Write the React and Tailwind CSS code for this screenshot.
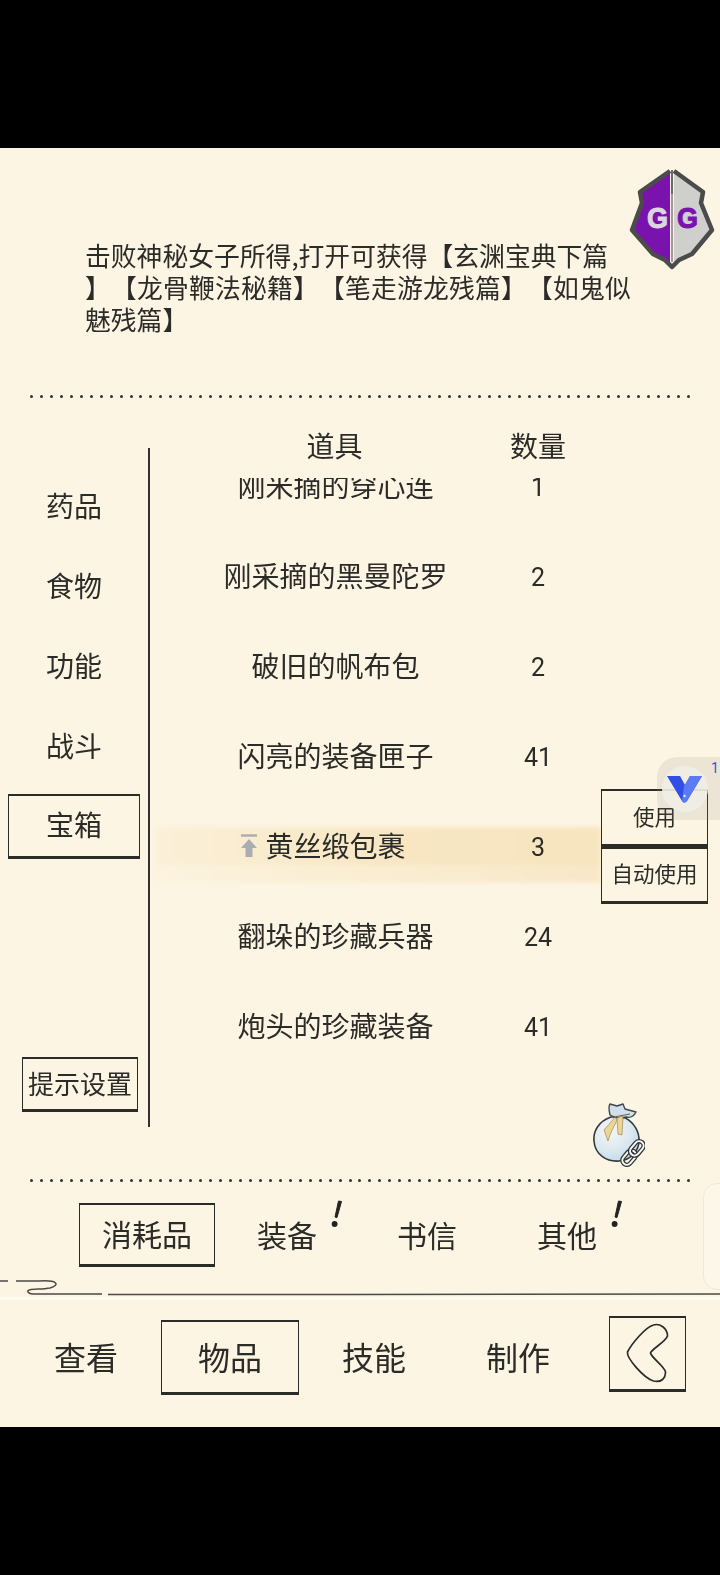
const sideTabs = ["药品", "食物", "功能", "战斗", "宝箱"];

const items = [
  { name: "刚米摘的穿心连", count: 1 },
  { name: "刚采摘的黑曼陀罗", count: 2 },
  { name: "破旧的帆布包", count: 2 },
  { name: "闪亮的装备匣子", count: 41 },
  { name: "黄丝缎包裹", count: 3, active: true },
  { name: "翻垛的珍藏兵器", count: 24 },
  { name: "炮头的珍藏装备", count: 41 },
];

const bagTabs = [
  { label: "消耗品", active: true },
  { label: "装备", alert: true },
  { label: "书信" },
  { label: "其他", alert: true },
];

const navTabs = [
  { label: "查看" },
  { label: "物品", active: true },
  { label: "技能" },
  { label: "制作" },
];

// the hand drawn frame used by every selected tab and button
const frame = "border-t-2 border-b-[3px] border-x-[1.5px] border-[#2b2b28]";

function DotLine() {
  return (
    <div className="ml-[30px] flex w-[660px] items-center justify-between">
      {Array.from({ length: 67 }, (_, i) => (
        <span key={i} className="size-[3px] rounded-full bg-[#33322e]" />
      ))}
    </div>
  );
}

function Alert() {
  return (
    <svg viewBox="0 0 12 28" className="absolute left-[114px] top-[-3px] h-[28px] w-[12px]">
      <path d="M10.5 1.5 L7.5 1 L4 17 L6 17.5 Z" fill="#22221f" stroke="#22221f" strokeLinejoin="round" />
      <circle cx="3.6" cy="24" r="2.9" fill="#22221f" />
    </svg>
  );
}

function GameGuardian() {
  return (
    <svg viewBox="-3 -3 87 103" className="absolute left-[629px] top-[167px] h-[103px] w-[87px]">
      <path d="M38 3 L9 23 L11 33 L2 60 L21 82 L38 93 Z" fill="#7a12ad" />
      <path d="M42 3 L70 23 L68 33 L78 60 L60 82 L42 93 Z" fill="#cfcfce" />
      <path
        d="M38 1 L8 22 L10 33 L0 60 L21 84 L33 90 L40 97 L47 90 L60 84 L80 60 L69 33 L71 22 L42 1"
        fill="none"
        stroke="#4b4b4b"
        strokeWidth="4.500"
        strokeLinejoin="round"
      />
      <path d="M40 0 V24" stroke="#6a6a6a" strokeWidth="2" />
      <path d="M40 24 V92" stroke="#4a3a52" strokeWidth="1" />
      <text x="15" y="58" fontFamily="Liberation Sans" fontWeight="700" fontSize="29" fill="#dcd6e0" stroke="#dcd6e0" strokeWidth="1" textLength="21" lengthAdjust="spacingAndGlyphs">G</text>
      <text x="45" y="58" fontFamily="Liberation Sans" fontWeight="700" fontSize="29" fill="#7a12ad" stroke="#7a12ad" strokeWidth="1" textLength="21" lengthAdjust="spacingAndGlyphs">G</text>
    </svg>
  );
}

function LootBag() {
  return (
    <svg viewBox="0 0 52 64" className="absolute left-[593px] top-[1103px] h-[64px] w-[52px]">
      <defs>
        <radialGradient id="bag" cx="0.35" cy="0.3" r="0.8">
          <stop offset="0" stopColor="#f6f6f2" />
          <stop offset="0.6" stopColor="#dbe8f0" />
          <stop offset="1" stopColor="#b9d6ea" />
        </radialGradient>
      </defs>
      <path d="M18 14 C 6 18 0 28 1 38 C 2 52 14 59 26 58 C 38 57 47 48 46 35 C 45 25 38 17 30 14 Z" fill="url(#bag)" stroke="#33383c" strokeWidth="1.6" />
      <path d="M17 12 C 16 7 15 4 17 1 L 24 3 L 30 1 L 32 6 L 43 9 C 41 13 37 15 33 14 C 28 16 22 15 17 12 Z" fill="#cfe0ec" stroke="#3f464b" strokeWidth="1.4" strokeLinejoin="round" />
      <path d="M22 14 C 18 20 13 24 11 27 L 15 38 C 17 30 21 24 24 17 Z" fill="#ecd595" stroke="#8d7b4c" strokeWidth="0.6" />
      <path d="M24 15 L 30 13 L 29 32 L 25 31 Z" fill="#ecd595" stroke="#8d7b4c" strokeWidth="0.6" />
      <path d="M21 14 L 37 11" stroke="#6b6141" strokeWidth="1.2" />
      <g transform="rotate(-50 40 50)" fill="none">
        <rect x="26" y="45.500" width="16" height="9" rx="4.500" stroke="#2f3336" strokeWidth="4.500" />
        <rect x="26" y="45.500" width="16" height="9" rx="4.500" stroke="#f7f7f4" strokeWidth="2" />
        <rect x="38" y="45.500" width="16" height="9" rx="4.500" stroke="#2f3336" strokeWidth="4.500" />
        <rect x="38" y="45.500" width="16" height="9" rx="4.500" stroke="#f7f7f4" strokeWidth="2" />
      </g>
    </svg>
  );
}

function FloatingBall() {
  return (
    <div className="absolute left-[657px] top-[757px] flex h-[63px] w-[63px] items-center justify-center rounded-l-[20px] bg-[#8d8d88]/15">
      <div className="mr-[8px] flex size-[46px] items-center justify-center rounded-full bg-[#f1eee6]/90">
        <svg viewBox="0 0 35 29" className="h-[29px] w-[35px]">
          <path d="M0 2 H13 L18 11 L23 2 H35 L20 27 Q17 30 15 27 Z" fill="#2f4fe6" />
          <path d="M23 2 H35 L20 27 Q17 30 15 27 L17 12 Z" fill="#5b7bf4" />
          <circle cx="17.500" cy="22" r="1.200" fill="#dfe6ff" />
        </svg>
      </div>
      <span className="absolute left-[54px] top-[2px] font-['Roboto',sans-serif] text-[14px] leading-[18px] text-[#3552d8]">1</span>
    </div>
  );
}

function ItemRow({ item }) {
  return (
    <div className="relative grid h-[90px] grid-cols-[297px_108px] items-center pl-[37px]">
      {item.active && (
        <div className="absolute left-[5px] right-0 top-[26px] flex h-[56px] flex-col blur-[2px]">
          <div className="h-[38px] bg-gradient-to-r from-[#fbf0d8] via-[#f8e7c4] to-[#f7e5bf]" />
          <div className="h-[18px] bg-gradient-to-r from-[#fcf3df] via-[#faedd1] to-[#f8e8c8]" />
        </div>
      )}
      <div className="relative flex justify-center pb-[2px] text-[28px] leading-[40px]">
        <span className="relative">
          {item.active && (
            <svg viewBox="0 0 16 24" className="absolute left-[-24px] top-[9px] h-[24px] w-[16px]">
              <path d="M0 1.500 H16" stroke="#a9adb0" strokeWidth="2.400" />
              <path d="M8 5 L16 14 H11.500 V23 H4.500 V14 H0 Z" fill="#a9adb0" />
            </svg>
          )}
          {item.name}
        </span>
      </div>
      <div className="relative pt-[3px] text-center font-['Roboto',sans-serif] text-[25px] leading-[40px]">{item.count}</div>
    </div>
  );
}

export default function App() {
  return (
    <div className="relative h-[1575px] w-[720px] overflow-hidden bg-black font-['Noto_Sans_CJK_SC',sans-serif] text-[#2b2b28]">
      <div className="h-[148px]" />

      <main className="flex h-[1279px] flex-col bg-[#fdf5e4] blur-[0.4px]">
        <p className="ml-[85px] mt-[91px] whitespace-nowrap text-[25.800px] leading-[32px] [font-feature-settings:'halt'_0,'chws'_0] [text-spacing-trim:space-all]">
          击败神秘女子所得,打开可获得【玄渊宝典下篇
          <br />
          <span className="tracking-[0.2px]">】【龙骨鞭法秘籍】【笔走游龙残篇】【如鬼似</span>
          <br />
          魅残篇】
        </p>

        <div className="mt-[60px]">
          <DotLine />
        </div>

        <section className="mt-[27px] flex items-start">
          <aside className="mt-[23px] flex h-[679px] w-[150px] flex-col border-r-2 border-[#33322e] pt-[18px] text-[28px]">
            {sideTabs.map((tab) => (
              <div key={tab} className="flex h-[80px] items-center">
                <div className={`ml-[8px] flex h-[65px] w-[132px] items-center justify-center pb-[3px] ${tab === "宝箱" ? frame : ""}`}>
                  {tab}
                </div>
              </div>
            ))}
            <div className={`mb-[15px] ml-[22px] mt-auto flex h-[55px] w-[116px] items-center justify-center whitespace-nowrap pb-[3px] text-[26px] ${frame}`}>
              提示设置
            </div>
          </aside>

          <div className="w-[451px]">
            <div className="grid h-[40px] grid-cols-[295px_112px] items-center pb-[2px] pl-[37px] text-center text-[28px] leading-[40px]">
              <div>道具</div>
              <div>数量</div>
            </div>
            <div className="mt-[13px] h-[593px] overflow-hidden">
              <div className="-mt-[37px]">
                {items.map((item) => (
                  <ItemRow key={item.name} item={item} />
                ))}
              </div>
            </div>
          </div>

          <div className="mt-[364px] w-[107px] text-[21.500px]">
            <div className={`flex h-[58px] items-center justify-center border-b-0 pb-[3px] ${frame}`}>使用</div>
            <div className={`flex h-[57px] items-center justify-center pb-[3px] ${frame}`}>自动使用</div>
          </div>
        </section>

        <div className="mt-[52px]">
          <DotLine />
        </div>

        <div className="mt-[21px] flex h-[64px] pl-[77px] text-[30px]">
          {bagTabs.map((tab) => (
            <div key={tab.label} className="relative flex w-[140px] items-center justify-center">
              <div className={`flex h-[64px] w-[136px] items-center justify-center pb-[2px] ${tab.active ? frame : ""}`}>
                {tab.label}
              </div>
              {tab.alert && <Alert />}
            </div>
          ))}
        </div>

        <svg viewBox="0 0 720 18" className="mt-[12px] h-[18px] w-[720px]">
          <path d="M0 2 H8 M16 2 H40 C 58 1 60 6 50 9 C 40 11 26 9 28 13 C 30 16 32 15 36 15 H102 M108 15.500 H350 L720 15" fill="none" stroke="#4b4a45" strokeWidth="1.500" />
        </svg>
        <div className="h-[3px] bg-[#fffaf0]" />

        <nav className="mt-[20px] flex h-[75px] items-center pl-[14px] text-[32px]">
          {navTabs.map((tab) => (
            <div key={tab.label} className="flex w-[144px] items-center justify-center">
              <div className={`flex h-[75px] w-[138px] items-center justify-center pb-[3px] ${tab.active ? frame : ""}`}>
                {tab.label}
              </div>
            </div>
          ))}
          <div className={`mb-[8px] ml-[19px] h-[76px] w-[77px] ${frame}`}>
            <svg viewBox="0 0 74 71" className="h-full w-full">
              <path
                d="M43 7 C 35 9 21 26 17 34 C 16 40 33 60 43 63 C 51 65 55 60 55 54 C 54 48 41 40 40 35 C 41 31 55 24 57 18 C 57 10 49 5 43 7 Z"
                fill="none"
                stroke="#2b2b28"
                strokeWidth="1.700"
              />
            </svg>
          </div>
        </nav>
      </main>

      <GameGuardian />
      <FloatingBall />
      <LootBag />
      <div className="absolute left-[703px] top-[1183px] h-[107px] w-[30px] rounded-l-[14px] border border-[#f1e9d7] bg-[#fdf7ea]" />
    </div>
  );
}
